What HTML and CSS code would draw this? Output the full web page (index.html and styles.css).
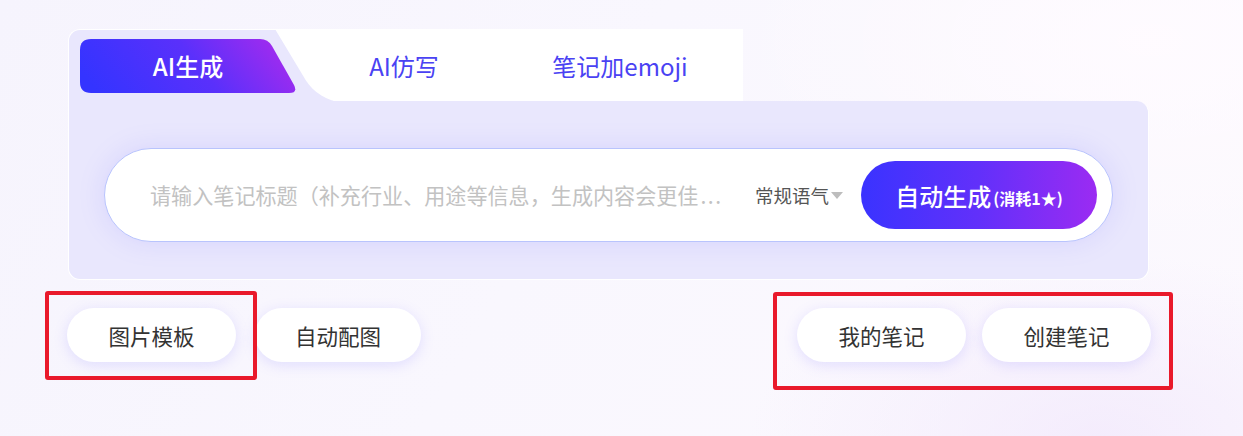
FILE: index.html
```html
<!DOCTYPE html>
<html lang="zh-CN">
<head>
<meta charset="utf-8">
<title>AI笔记</title>
<link rel="stylesheet" href="styles.css">
</head>
<body>
<div class="page">
  <div class="panel">
    <div class="tabs">
      <div class="tab tab-active">
        <svg class="tab-shape" width="217" height="54" viewBox="0 0 217 54" aria-hidden="true">
          <defs>
            <linearGradient id="tg" x1="0" y1="0.6" x2="1" y2="0.4">
              <stop offset="0" stop-color="#3434ff"/>
              <stop offset="0.55" stop-color="#5a30fb"/>
              <stop offset="1" stop-color="#a42bee"/>
            </linearGradient>
          </defs>
          <path d="M11,0 H180 Q188,0 192,7 L214,46 Q218,54 209,54 H11 Q0,54 0,43 V11 Q0,0 11,0 Z" fill="url(#tg)"/>
        </svg>
        <span class="tab-label">AI生成</span>
      </div>
      <div class="tab">AI仿写</div>
      <div class="tab">笔记加emoji</div>
    </div>
    <div class="panel-body">
      <div class="input-pill">
        <div class="placeholder">请输入笔记标题（补充行业、用途等信息，生成内容会更佳<span class="dots">...</span></div>
        <div class="tone">常规语气<span class="caret"></span></div>
        <button class="gen-btn"><span class="gen-main">自动生成</span><span class="gen-cost">(消耗1★)</span></button>
      </div>
    </div>
  </div>
  <div class="actions">
    <div class="group group-left">
      <div class="pill-btn">图片模板</div>
      <div class="pill-btn pill-narrow">自动配图</div>
    </div>
    <div class="group group-right">
      <div class="pill-btn">我的笔记</div>
      <div class="pill-btn">创建笔记</div>
    </div>
  </div>
  <div class="mark mark-left"></div>
  <div class="mark mark-right"></div>
</div>
</body>
</html>
```
FILE: styles.css
```css
* { box-sizing: border-box; }
html, body { margin: 0; padding: 0; }
body {
  width: 1243px;
  height: 436px;
  overflow: hidden;
  font-family: "Noto Sans CJK SC", "Noto Sans", sans-serif;
  background:
    radial-gradient(ellipse 600px 300px at 1150px 40px, rgba(255,251,255,0.95), rgba(255,255,255,0) 70%),
    radial-gradient(ellipse 500px 260px at 1100px 436px, rgba(242,233,252,0.8), rgba(255,255,255,0) 70%),
    linear-gradient(120deg, #f6f4fd 0%, #f9f7fe 45%, #fcf9fe 100%);
}
.page {
  position: relative;
  width: 1243px;
  height: 436px;
  padding: 29px 0 0 68px;
}
.panel { width: 1081px; }
.tabs {
  position: relative;
  width: 675px;
  height: 72px;
  display: flex;
  padding: 9px 0 0 11px;
  background: #e9e7fd;
  border-top: 1px solid #ffffff;
  border-left: 1px solid #ffffff;
  border-top-left-radius: 12px;
  overflow: hidden;
}
.tabs::before {
  content: "";
  position: absolute;
  left: 206px;
  top: -1px;
  width: 700px;
  height: 73px;
  background: #ffffff;
  transform-origin: top left;
  transform: skewX(31deg);
  border-bottom-left-radius: 22px;
}
.tab {
  position: relative;
  z-index: 1;
  width: 216px;
  height: 54px;
  display: flex;
  align-items: center;
  justify-content: center;
  font-size: 24px;
  color: #4a42f3;
  line-height: 1;
}
.tab-active { color: #ffffff; font-weight: 500; }
.tab-shape { position: absolute; left: 0; top: 0; }
.tab-label { position: relative; }
.panel-body {
  background: #e9e7fd;
  padding: 47px 35px 37px 35px;
  border: 1px solid #ffffff;
  border-top: none;
  border-radius: 0 12px 12px 12px;
}
.input-pill {
  height: 94px;
  display: flex;
  align-items: center;
  padding: 0 15px 0 45px;
  background: #ffffff;
  border: 1px solid #b9c4fd;
  border-radius: 47px;
  box-shadow: 0 0 26px rgba(135, 125, 255, 0.18);
}
.placeholder {
  flex: 1;
  min-width: 0;
  margin-right: 28px;
  white-space: nowrap;
  overflow: hidden;
  font-size: 21.1px;
  color: #c2c2c2;
}
.dots { letter-spacing: 1.5px; margin-left: 2px; }
.tone {
  display: flex;
  align-items: center;
  font-size: 18.5px;
  color: #555555;
  margin-right: 18px;
}
.caret {
  display: inline-block;
  margin-left: 2px;
  margin-top: 1px;
  width: 0;
  height: 0;
  border-left: 6px solid transparent;
  border-right: 6px solid transparent;
  border-top: 7px solid #bdbdbd;
}
.gen-btn {
  width: 236px;
  height: 68px;
  border: none;
  border-radius: 34px;
  background: linear-gradient(90deg, #3a33ff 0%, #6230fa 50%, #9b2bf2 100%);
  color: #ffffff;
  display: flex;
  align-items: center;
  justify-content: center;
  font-family: inherit;
  padding: 0;
}
.gen-main { font-size: 24px; font-weight: 500; }
.gen-cost { font-size: 16px; font-weight: 700; margin-left: 2px; margin-top: 5px; }
.actions {
  width: 1084px;
  margin-left: -1px;
  margin-top: 28px;
  display: flex;
  justify-content: space-between;
}
.group { display: flex; }
.group-left { gap: 19px; }
.group-right { gap: 16px; }
.pill-btn {
  width: 169px;
  height: 54px;
  border-radius: 27px;
  background: #ffffff;
  display: flex;
  align-items: center;
  justify-content: center;
  font-size: 21.5px;
  color: #333333;
  box-shadow: 0 3px 14px rgba(130, 120, 255, 0.2);
}
.pill-narrow { width: 166px; }
.mark {
  position: absolute;
  border: 4px solid #e9192b;
  border-radius: 3px;
  pointer-events: none;
}
.mark-left { left: 45px; top: 291px; width: 212px; height: 89px; }
.mark-right { left: 773px; top: 292px; width: 400px; height: 98px; }
```
